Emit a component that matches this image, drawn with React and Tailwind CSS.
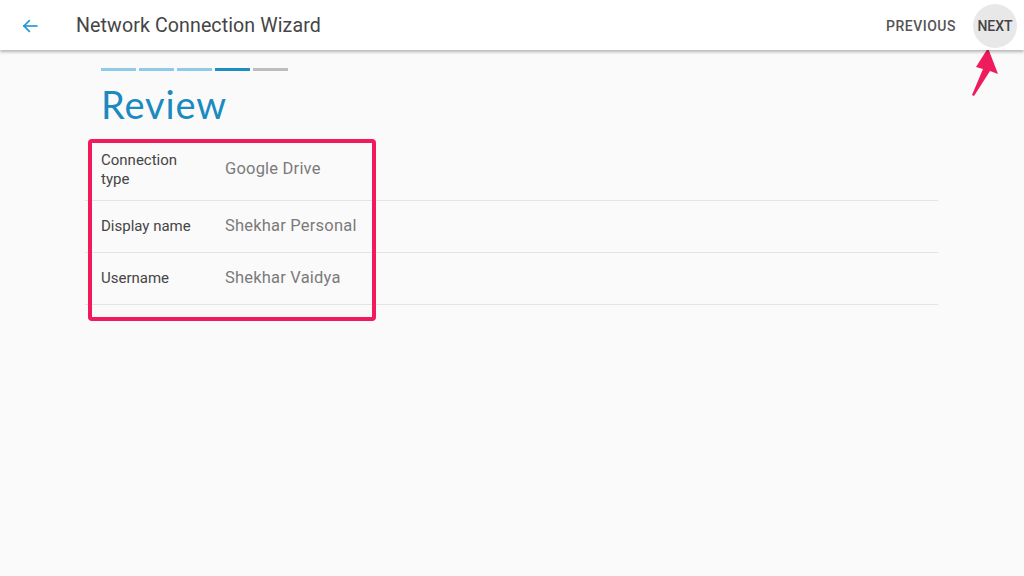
import React from 'react';

const rows = [
  { label: 'Connection type', value: 'Google Drive', tall: true },
  { label: 'Display name', value: 'Shekhar Personal' },
  { label: 'Username', value: 'Shekhar Vaidya' },
];

const steps = ['bg-[#8fcbe6]', 'bg-[#8fcbe6]', 'bg-[#8fcbe6]', 'bg-[#1d8dc2]', 'bg-[#bdbdbd]'];

const App = () => {
  return (
    <div className="relative w-[1024px] h-[576px] overflow-hidden bg-[#fafafa]" style={{ fontFamily: 'Roboto, "Noto Sans", sans-serif' }}>

      {/* ===== HEADER ===== */}
      <div className="relative z-10 h-[50px] pt-[2px] bg-white flex items-center shadow-[0_2px_3px_rgba(0,0,0,0.28)]">
        <button className="ml-[21px] w-[18px] h-[18px] flex items-center justify-center text-[#2196d3]">
          <svg width="18" height="18" viewBox="0 0 24 24" fill="none" stroke="currentColor" strokeWidth="2.2" strokeLinecap="square">
            <path d="M21 12H4" />
            <path d="M11 5l-7 7 7 7" />
          </svg>
        </button>
        <div className="ml-[37px] text-[19.6px] text-[#454545] tracking-[0.1px]">Network Connection Wizard</div>
        <div className="flex-1" />
        <button className="text-[14px] font-medium text-[#555] mr-[17px] tracking-[0.5px]">PREVIOUS</button>
        <button className="relative w-[44px] h-[44px] mr-[7px] rounded-full bg-[#e8e8e8] flex items-center justify-center text-[14px] font-medium text-[#444]">
          NEXT
        </button>
      </div>

      {/* ===== CONTENT ===== */}
      <div className="ml-[85px] w-[853px]">
        <div className="pl-[16px] pt-[18px] flex gap-[3px]">
          {steps.map((c, i) => (
            <div key={i} className={`w-[35px] h-[3px] ${c}`} />
          ))}
        </div>
        <div className="pl-[16px] mt-[11px] text-[38px] leading-[44px] tracking-[0.9px] text-[#1a8ac0]" style={{ fontFamily: 'Lato, Roboto, sans-serif' }}>
          Review
        </div>

        <div className="mt-[13px]">
          {rows.map((r) => (
            <div key={r.label} className={`flex items-center border-b border-[#e4e4e4] ${r.tall ? 'h-[62px]' : 'h-[52px]'}`}>
              <div className="pl-[16px] w-[140px] pr-[28px] text-[15px] leading-[19px] text-[#454545]">{r.label}</div>
              <div className="text-[16.5px] text-[#7a7a7a] tracking-[0.2px]">{r.value}</div>
            </div>
          ))}
        </div>
      </div>

      {/* ===== ANNOTATIONS ===== */}
      <div className="absolute left-[88px] top-[139px] w-[288px] h-[182px] border-[4px] border-[#ef1b5c] rounded-[4px]" />
      <svg className="absolute left-[960px] top-[40px]" width="40" height="62" viewBox="0 0 40 62">
        <polygon points="28,8 38,34 30,31 14,56 12,55 23,29 16,27" fill="#ef1b5c" />
      </svg>
    </div>
  );
};

export default App;
